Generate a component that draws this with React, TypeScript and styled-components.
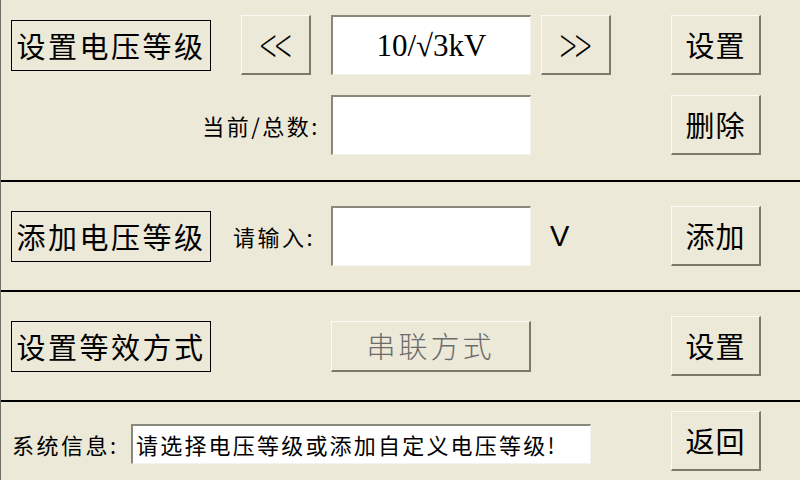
import React from "react";
import styled, { createGlobalStyle } from "styled-components";

const GlobalStyle = createGlobalStyle`
  html, body {
    margin: 0;
    padding: 0;
    background: #ece9d8;
  }
  body {
    font-family: "Noto Sans CJK SC", "Liberation Sans", sans-serif;
    color: #000;
  }
`;

const Screen = styled.div`
  width: 800px;
  height: 480px;
  box-sizing: border-box;
  border-left: 1px solid #6f6e66;
  background: #ece9d8;
  display: flex;
  flex-direction: column;
  overflow: hidden;
`;

const Section = styled.section<{ $height: number; $top?: number }>`
  height: ${(p) => p.$height}px;
  flex: none;
  box-sizing: border-box;
  display: flex;
  flex-direction: column;
  justify-content: ${(p) => (p.$top ? "flex-start" : "center")};
  padding-top: ${(p) => p.$top ?? 0}px;
  gap: 20px;
  border-bottom: 2px solid #000;
  &:last-child {
    border-bottom: none;
  }
`;

const Row = styled.div`
  display: grid;
  grid-template-columns: 10px 200px 30px 70px 20px 200px 10px 70px 60px 90px;
  align-items: center;
  height: 60px;
`;

const TitleBox = styled.div`
  grid-column: 2;
  height: 51px;
  box-sizing: border-box;
  border: 1px solid #000;
  display: flex;
  align-items: center;
  justify-content: center;
  font-size: 29px;
  letter-spacing: 2.5px;
  line-height: 1;
`;

const Button = styled.button<{ $col: number; $tall?: number; $muted?: boolean }>`
  grid-column: ${(p) => p.$col};
  height: ${(p) => p.$tall ?? 60}px;
  margin: 0;
  padding: 0;
  box-sizing: border-box;
  background: #ece9d8;
  border-style: solid;
  border-width: 1px 2px 2px 1px;
  border-color: #fbfaf5 #7b796c #7b796c #fbfaf5;
  font-family: "Noto Sans CJK SC", sans-serif;
  font-size: 29px;
  letter-spacing: ${(p) => (p.$muted ? 3 : 1)}px;
  color: ${(p) => (p.$muted ? "#6c6c6c" : "#000")};
  font-weight: ${(p) => (p.$muted ? 300 : 400)};
  line-height: 1;
  display: flex;
  align-items: center;
  justify-content: center;
`;

const Arrow = styled.span`
  display: inline-block;
  font-family: "DejaVu Sans ExtraLight", "DejaVu Sans", sans-serif;
  font-weight: 200;
  font-size: 30px;
  letter-spacing: -5px;
  padding-right: 5px;
  transform: scale(0.75, 1.5);
`;

const Field = styled.div<{ $col: number; $span?: number; $tall?: number }>`
  grid-column: ${(p) => p.$col} / span ${(p) => p.$span ?? 1};
  height: ${(p) => p.$tall ?? 60}px;
  box-sizing: border-box;
  background: #fff;
  border-style: solid;
  border-width: 2px 1px 1px 2px;
  border-color: #8a887d #f4f3ee #f4f3ee #8a887d;
  display: flex;
  align-items: center;
`;

const Value = styled.span`
  width: 100%;
  text-align: center;
  font-family: "Liberation Serif", serif;
  font-size: 31px;
  line-height: 1;
`;

const Caption = styled.span<{ $col: string; $pad: number }>`
  grid-column: ${(p) => p.$col};
  justify-self: end;
  padding-right: ${(p) => p.$pad}px;
  font-size: 22px;
  letter-spacing: 2.5px;
  line-height: 1;
  white-space: nowrap;
`;

const Unit = styled.span`
  grid-column: 8;
  padding-left: 9px;
  font-family: "Liberation Sans", sans-serif;
  font-size: 29px;
  line-height: 1;
`;

const InfoRow = styled.div`
  display: flex;
  align-items: center;
  height: 60px;
  padding-left: 11px;
`;

const InfoLabel = styled.span`
  width: 119px;
  font-size: 22px;
  letter-spacing: 2.5px;
  line-height: 1;
  margin-top: 6px;
`;

const Message = styled(Field)`
  width: 460px;
  padding-left: 3px;
  margin-top: 5px;
  font-size: 22px;
  letter-spacing: 2.2px;
  line-height: 1;
  white-space: nowrap;
`;

const InfoButton = styled(Button)`
  width: 90px;
  margin-left: 80px;
`;

export default function App() {
  return (
    <>
      <GlobalStyle />
      <Screen>
        <Section $height={182} $top={15}>
          <Row>
            <TitleBox>设置电压等级</TitleBox>
            <Button $col={4}>
              <Arrow>&lt;&lt;</Arrow>
            </Button>
            <Field $col={6}>
              <Value>10/√3kV</Value>
            </Field>
            <Button $col={8}>
              <Arrow>&gt;&gt;</Arrow>
            </Button>
            <Button $col={10}>设置</Button>
          </Row>
          <Row>
            <Caption $col="2 / span 4" $pad={11}>
              当前/总数:
            </Caption>
            <Field $col={6} />
            <Button $col={10}>删除</Button>
          </Row>
        </Section>
        <Section $height={110}>
          <Row>
            <TitleBox>添加电压等级</TitleBox>
            <Caption $col="3 / span 3" $pad={16}>
              请输入:
            </Caption>
            <Field $col={6} />
            <Unit>V</Unit>
            <Button $col={10}>添加</Button>
          </Row>
        </Section>
        <Section $height={110}>
          <Row>
            <TitleBox>设置等效方式</TitleBox>
            <Button $col={6} $tall={51} $muted>
              串联方式
            </Button>
            <Button $col={10}>设置</Button>
          </Row>
        </Section>
        <Section $height={78}>
          <InfoRow>
            <InfoLabel>系统信息:</InfoLabel>
            <Message $col={1} $tall={40}>
              请选择电压等级或添加自定义电压等级!
            </Message>
            <InfoButton $col={1}>返回</InfoButton>
          </InfoRow>
        </Section>
      </Screen>
    </>
  );
}
